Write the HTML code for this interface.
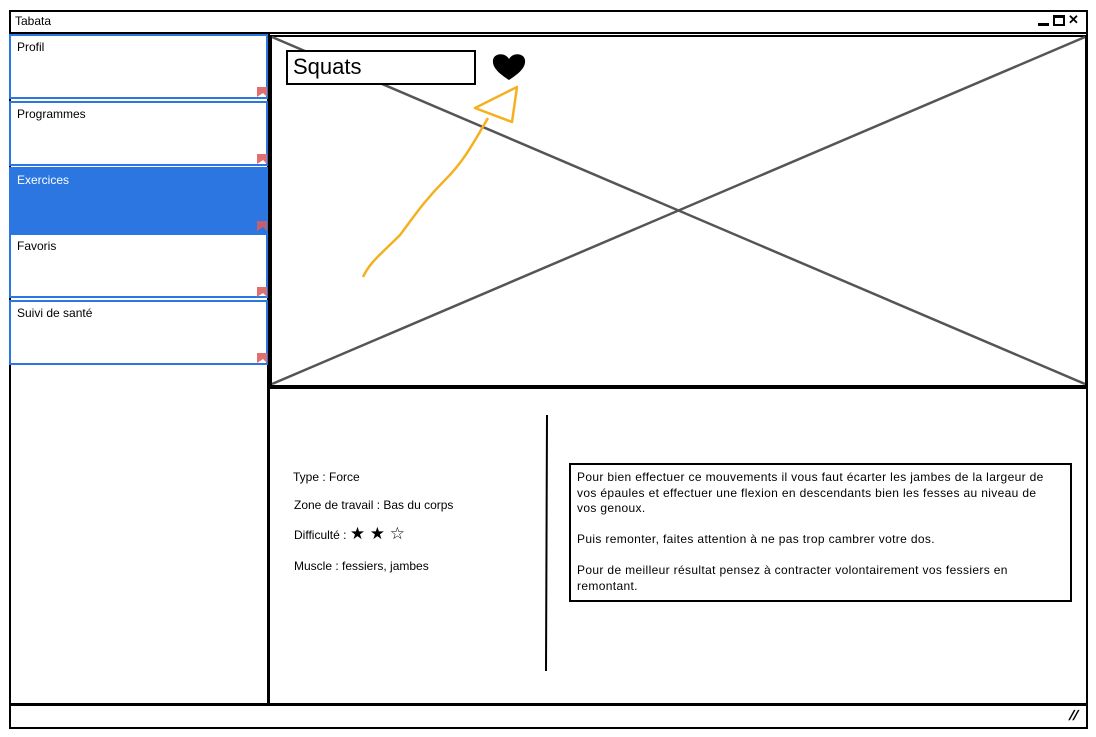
<!DOCTYPE html>
<html><head><meta charset="utf-8"><style>
body{margin:0;width:1096px;height:737px;background:#fff;position:relative;overflow:hidden;font-family:"Liberation Sans",sans-serif;color:#000}
.a{position:absolute;box-sizing:border-box}
.item{position:absolute;box-sizing:border-box;left:9px;width:259px;border:2px solid #2b76e0;background:#fff;font-size:12px;padding:4px 0 0 6px}
.t{position:absolute;font-size:12px;white-space:nowrap}
</style></head><body>
<div class="a" style="left:9px;top:10px;width:1079px;height:719px;border:2.5px solid #000"></div>
<div class="a" style="left:9px;top:32px;width:1079px;height:2px;background:#000"></div>
<div class="t" style="left:15px;top:14px">Tabata</div>
<div class="a" style="left:1038px;top:23px;width:11px;height:3px;background:#000"></div>
<div class="a" style="left:1053px;top:15px;width:12px;height:11px;border:2px solid #000;border-top-width:3px"></div>
<div class="t" style="left:1068px;top:12px;font-weight:bold;font-size:13px">✕</div>
<div class="a" style="left:9px;top:703px;width:1079px;height:2.5px;background:#000"></div>
<div class="t" style="left:1070px;top:707px;font-weight:bold;font-size:14px;transform:skewX(-20deg)">//</div>
<div class="a" style="left:267px;top:33px;width:2.5px;height:672px;background:#000"></div>
<div class="item" style="top:34px;height:65px">Profil</div>
<div class="item" style="top:101px;height:65px">Programmes</div>
<div class="item" style="top:167px;height:66px;background:#2b76e0;color:#fff;border:none;padding:6px 0 0 8px">Exercices</div>
<div class="item" style="top:233px;height:65px">Favoris</div>
<div class="item" style="top:300px;height:65px">Suivi de santé</div>
<div class="a" style="left:270px;top:35px;width:817px;height:352px;border:2px solid #000"></div>
<div class="a" style="left:268px;top:386px;width:820px;height:2.5px;background:#000"></div>
<svg class="a" style="left:0;top:0" width="1096" height="737">
<line x1="272" y1="37" x2="1085" y2="384" stroke="#555" stroke-width="2.5"/>
<line x1="272" y1="384" x2="1085" y2="37" stroke="#555" stroke-width="2.5"/>
<g fill="#e07070"><path d="M257 97 l0-10 10 0 0 10 -4-4z"/><path d="M257 164 l0-10 10 0 0 10 -4-4z"/><path d="M257 231 l0-10 10 0 0 10 -4-4z" fill="#c06070"/><path d="M257 297 l0-10 10 0 0 10 -4-4z"/><path d="M257 363 l0-10 10 0 0 10 -4-4z"/></g>
<path d="M363 277 C370 262 380 255 400 235 C415 215 425 200 445 180 C465 160 475 140 488 118" stroke="#f5b020" stroke-width="2.5" fill="none"/>
<path d="M517 87 L475 108 L512 122 Z" stroke="#f5b020" stroke-width="2.5" fill="none" stroke-linejoin="round"/>
<path d="M509 80 C500 74 492 68 493 60 C494 53 505 52 509 59 C513 52 524 53 525 60 C526 68 518 74 509 80Z" fill="#000"/>
<line x1="547" y1="415" x2="546" y2="671" stroke="#000" stroke-width="2"/>
</svg>
<div class="a" style="left:286px;top:50px;width:190px;height:35px;border:2px solid #000;background:#fff;font-size:22px;padding:2px 0 0 5px">Squats</div>
<div class="t" style="left:293px;top:470px">Type : Force</div>
<div class="t" style="left:294px;top:498px">Zone de travail : Bas du corps</div>
<div class="t" style="left:294px;top:524px">Difficulté : <span style="font-size:17px">★ ★ ☆</span></div>
<div class="t" style="left:294px;top:559px">Muscle : fessiers, jambes</div>
<div class="a" style="left:569px;top:463px;width:503px;height:139px;border:2px solid #000;font-size:12px;letter-spacing:0.35px;line-height:15.5px;padding:5px 6px;white-space:nowrap">Pour bien effectuer ce mouvements il vous faut écarter les jambes de la largeur de<br>vos épaules et effectuer une flexion en descendants bien les fesses au niveau de<br>vos genoux.<br><br>Puis remonter, faites attention à ne pas trop cambrer votre dos.<br><br>Pour de meilleur résultat pensez à contracter volontairement vos fessiers en<br>remontant.</div>
</body></html>
